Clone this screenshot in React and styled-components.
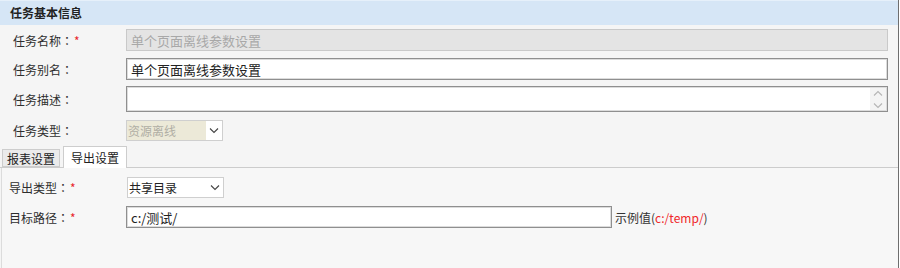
import React from "react";
import styled, { createGlobalStyle } from "styled-components";

const Global = createGlobalStyle`
  html, body { margin: 0; padding: 0; background: #ffffff; }
  body { font-family: "Noto Sans CJK SC", "Noto Sans", "Liberation Sans", sans-serif; font-size: 12px; color: #333; }
  * { box-sizing: border-box; }
`;

const Page = styled.div`
  width: 899px;
  height: 268px;
  background: #f5f5f5;
  border-right: 1px solid #6e6e6e;
  display: flex;
  flex-direction: column;
  overflow: hidden;
`;

const Header = styled.div`
  height: 25px;
  background: #d6e6f6;
  border-top: 1px solid #e6f0fa;
  padding-left: 10px;
  font-weight: bold;
  font-size: 12px;
  line-height: 23px;
  color: #222;
`;

const Form = styled.div`
  display: flex;
  flex-direction: column;
  padding: 4px 10px 0 13px;
`;

const Row = styled.div`
  display: flex;
  align-items: center;
  height: ${(p) => p.$h}px;
  margin-bottom: ${(p) => p.$mb || 0}px;
`;

const Label = styled.div`
  width: ${(p) => p.$w || 113}px;
  flex: none;
  font-size: 12px;
  color: #2e2e2e;
  white-space: nowrap;
`;

const Colon = styled.span`
  font-family: "Noto Sans CJK TC", "Noto Sans CJK SC", sans-serif;
`;

const Star = styled.span`
  color: #e8262a;
  margin-left: 1px;
`;

const TextInput = styled.input`
  height: 100%;
  width: ${(p) => (p.$w ? `${p.$w}px` : "auto")};
  flex: ${(p) => (p.$w ? "none" : "1")};
  margin: 0;
  padding: 0 4px;
  font-family: "Noto Sans CJK SC", "Noto Sans", "Liberation Sans", sans-serif;
  font-size: 13px;
  color: ${(p) => (p.disabled ? "#a8a8a8" : "#222")};
  background: ${(p) => (p.disabled ? "#e4e4e4" : "#ffffff")};
  border: 1px solid ${(p) => (p.disabled ? "#c9c9c9" : "#8f8f8f")};
  box-shadow: ${(p) => (p.disabled ? "none" : "inset 0 0 0 1px #dcdcdc")};
  outline: none;
  border-radius: 0;
`;

const AreaBox = styled.div`
  flex: 1;
  height: 100%;
  display: flex;
  background: #fff;
  border: 1px solid #8f8f8f;
  box-shadow: inset 0 0 0 1px #dcdcdc;
`;

const AreaText = styled.div`
  flex: 1;
`;

const ScrollCol = styled.div`
  width: 16px;
  margin: 1px 1px 1px 0;
  background: #f4f4f4;
  display: flex;
  flex-direction: column;
  align-items: center;
  justify-content: space-between;
  padding: 2px 0 1px;
`;

const SelectBox = styled.div`
  width: 97px;
  height: 100%;
  flex: none;
  display: flex;
  align-items: stretch;
  border: 1px solid #cfcfcf;
  background: #fff;
`;

const SelectValue = styled.div`
  flex: 1;
  display: flex;
  align-items: center;
  padding-left: 1px;
  font-size: 12px;
  color: ${(p) => (p.$disabled ? "#b0aea4" : "#222")};
  background: ${(p) => (p.$disabled ? "#ece9d8" : "#fff")};
`;

const SelectArrow = styled.div`
  width: 16px;
  display: flex;
  align-items: center;
  justify-content: center;
  background: #fff;
`;

const TabBar = styled.div`
  display: flex;
  align-items: flex-end;
  height: 22px;
  margin-top: 5px;
  padding-left: 2px;
  gap: 3px;
  border-bottom: 1px solid #cccccc;
`;

const Tab = styled.div`
  height: ${(p) => (p.$active ? 22 : 18)}px;
  margin-bottom: ${(p) => (p.$active ? -1 : 0)}px;
  padding: 0 ${(p) => (p.$active ? 7 : 4)}px;
  display: flex;
  align-items: center;
  font-size: 12px;
  color: #222;
  background: ${(p) => (p.$active ? "#ffffff" : "#ebebeb")};
  border: 1px solid #cdcdcd;
  border-bottom: ${(p) => (p.$active ? "none" : "1px solid #cdcdcd")};
`;

const Panel = styled.div`
  flex: 1;
  background: #f7f7f7;
  border-left: 1px solid #dcdcdc;
  margin-left: 1px;
  padding: 9px 0 0 7px;
  display: flex;
  flex-direction: column;
`;

const Hint = styled.span`
  margin-left: 3px;
  font-size: 12px;
  color: #333;
  white-space: nowrap;
`;

const HintRed = styled.span`
  color: #f0262a;
`;

const Chevron = ({ up, color = "#555", w = 10, h = 6 }) => (
  <svg width={w} height={h} viewBox="0 0 10 6">
    <path
      d={up ? "M1 5.5 L5 1.5 L9 5.5" : "M1 0.5 L5 4.5 L9 0.5"}
      fill="none"
      stroke={color}
      strokeWidth="1.1"
    />
  </svg>
);

const Select = ({ value, disabled }) => (
  <SelectBox>
    <SelectValue $disabled={disabled}>{value}</SelectValue>
    <SelectArrow>
      <Chevron color="#444" />
    </SelectArrow>
  </SelectBox>
);

const FieldLabel = ({ text, required, w }) => (
  <Label $w={w}>
    {text}
    <Colon>：</Colon>
    {required && <Star>*</Star>}
  </Label>
);

export default function App() {
  return (
    <>
      <Global />
      <Page>
        <Header>任务基本信息</Header>
        <Form>
          <Row $h={22} $mb={7}>
            <FieldLabel text="任务名称" required />
            <TextInput disabled defaultValue="单个页面离线参数设置" />
          </Row>
          <Row $h={22} $mb={6}>
            <FieldLabel text="任务别名" />
            <TextInput defaultValue="单个页面离线参数设置" />
          </Row>
          <Row $h={26} $mb={8}>
            <FieldLabel text="任务描述" />
            <AreaBox>
              <AreaText />
              <ScrollCol>
                <Chevron up color="#b5b5b5" />
                <Chevron color="#b5b5b5" />
              </ScrollCol>
            </AreaBox>
          </Row>
          <Row $h={21}>
            <FieldLabel text="任务类型" />
            <Select value="资源离线" disabled />
          </Row>
        </Form>
        <TabBar>
          <Tab>报表设置</Tab>
          <Tab $active>导出设置</Tab>
        </TabBar>
        <Panel>
          <Row $h={21} $mb={8}>
            <FieldLabel text="导出类型" required w={118} />
            <Select value="共享目录" />
          </Row>
          <Row $h={22}>
            <FieldLabel text="目标路径" required w={117} />
            <TextInput $w={486} defaultValue="c:/测试/" />
            <Hint>
              示例值(<HintRed>c:/temp/</HintRed>)
            </Hint>
          </Row>
        </Panel>
      </Page>
    </>
  );
}
